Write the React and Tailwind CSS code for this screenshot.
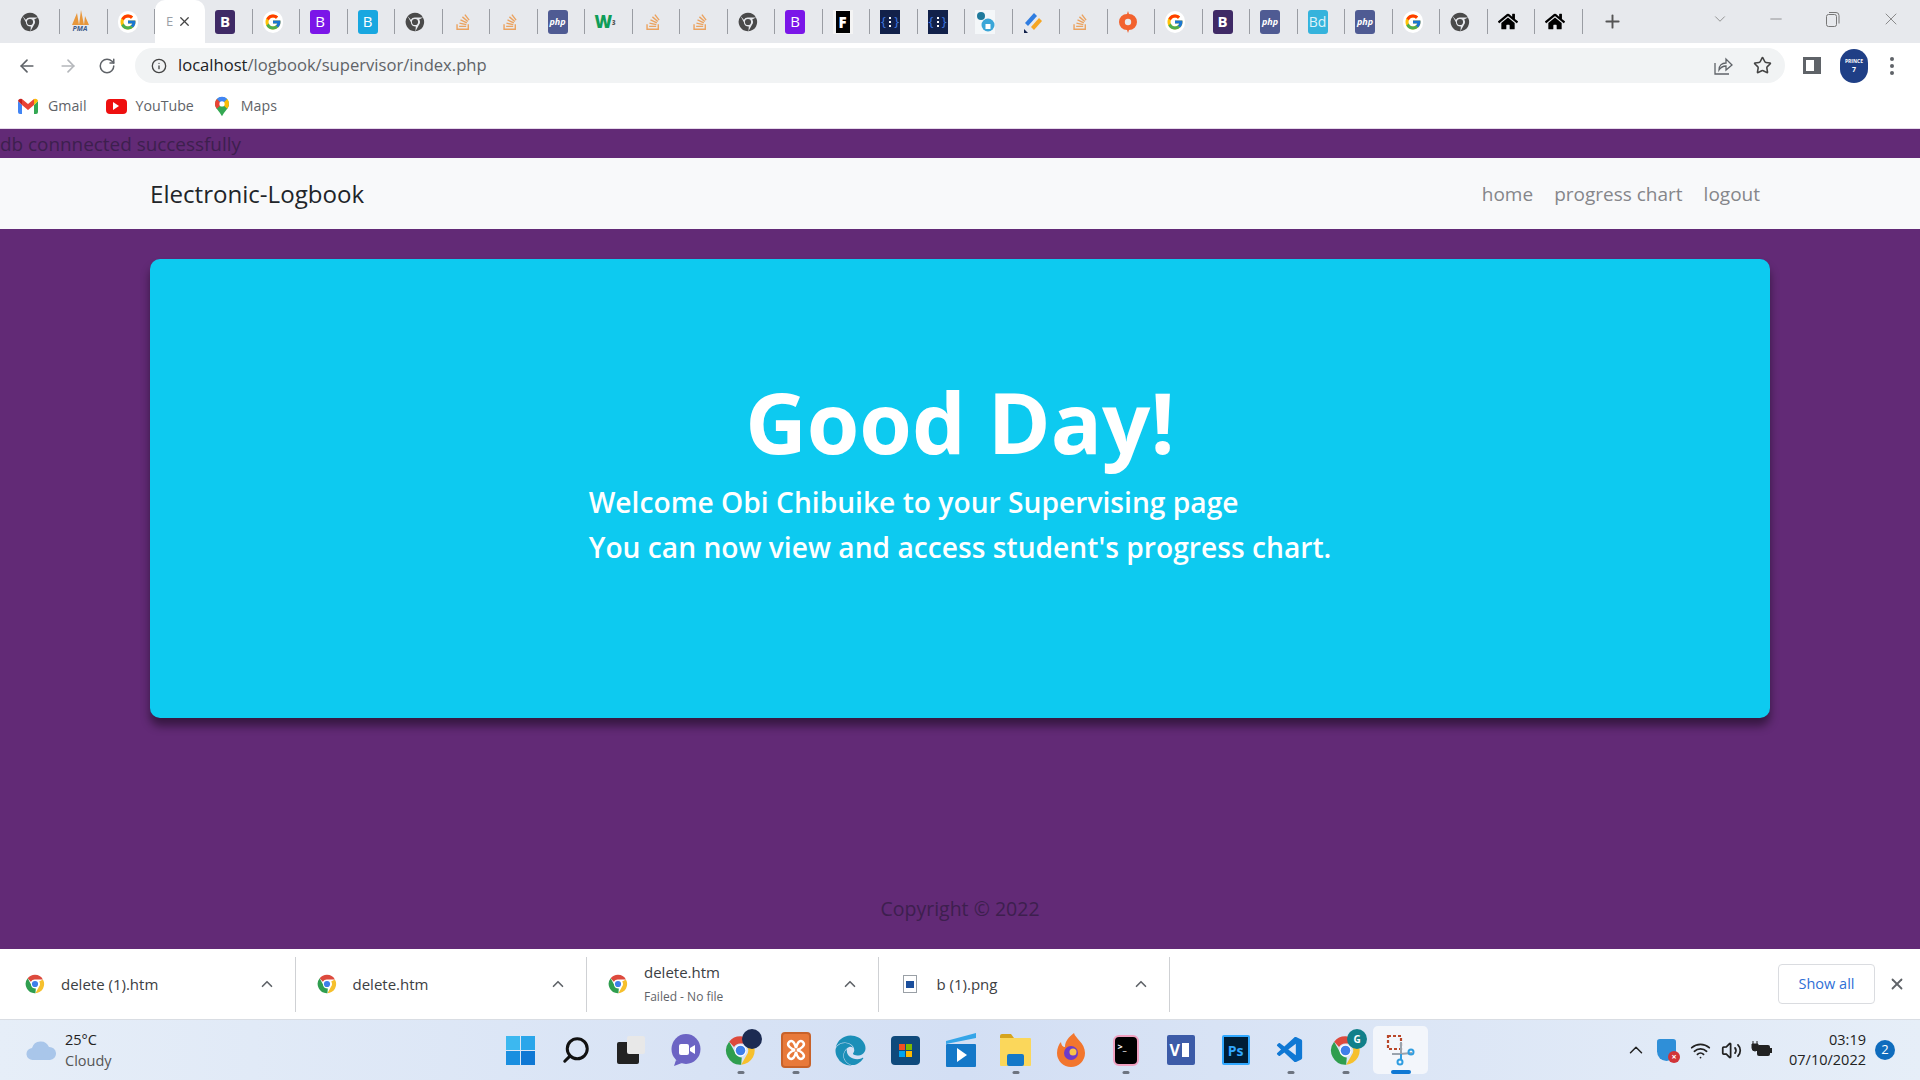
import { ArrowLeft, ArrowRight, RotateCw, Info, Star, ChevronUp, ChevronDown, X, Plus, Minus, Search, Wifi, Volume2 } from 'lucide-react';
import { FaHome, FaStackOverflow, FaEdge } from 'react-icons/fa';
import { FcGoogle } from 'react-icons/fc';
import { VscVscode } from 'react-icons/vsc';

function ChromeLogo({ size = 20, gray = false }) {
  const red = gray ? '#4a4a4a' : '#dd4a3d';
  const yellow = gray ? '#4a4a4a' : '#f6c02d';
  const green = gray ? '#4a4a4a' : '#2f9e4f';
  const blue = gray ? '#4a4a4a' : '#3f7fea';
  return (
    <svg width={size} height={size} viewBox="0 0 24 24" className="shrink-0">
      <path d="M12 1a11 11 0 0 1 9.5 5.5H12A5.5 5.5 0 0 0 7 9.3L3.2 5.2A11 11 0 0 1 12 1z" fill={red} />
      <path d="M21.5 6.5A11 11 0 0 1 12.5 23l4.3-7.6A5.5 5.5 0 0 0 17 9l4.5-2.5z" fill={yellow} />
      <path d="M3.2 5.2L7.4 12.8a5.5 5.5 0 0 0 5.6 4.6L12.5 23A11 11 0 0 1 3.2 5.2z" fill={green} />
      <circle cx="12" cy="12" r="4.6" fill={gray ? '#e7e9ed' : '#fff'} />
      <circle cx="12" cy="12" r="3.7" fill={gray ? '#4a4a4a' : blue} />
    </svg>
  );
}

function LetterIcon({ bg, color = 'text-white', label, cls = 'text-[15px] font-bold' }) {
  return (
    <div className={`w-[20px] h-[24px] rounded-[3px] flex items-center justify-center ${bg} ${color} ${cls}`}>
      {label}
    </div>
  );
}

function Favicon({ kind }) {
  switch (kind) {
    case 'chrome':
      return <ChromeLogo gray size={20} />;
    case 'google':
      return (
        <div className="w-[20px] h-[22px] rounded-full bg-white flex items-center justify-center">
          <FcGoogle size={18} />
        </div>
      );
    case 'pma':
      return (
        <div className="w-[20px] h-[24px] flex flex-col items-center">
          <svg width="20" height="15" viewBox="0 0 20 15">
            <path d="M2 15L7 3l2 12zM9 15l2-15 3 15zM14 15l1-9 4 9z" fill="#e8973b" />
          </svg>
          <span className="text-[7px] leading-[8px] font-bold italic text-[#3f5c8c]">PMA</span>
        </div>
      );
    case 'bsDark':
      return <LetterIcon bg="bg-[#3f2a66]" label="B" />;
    case 'bsPurple':
      return <LetterIcon bg="bg-[#7b16e8]" label="B" cls="text-[15px]" />;
    case 'bsBlue':
      return <LetterIcon bg="bg-[#18a7e0]" label="B" cls="text-[15px]" />;
    case 'so':
      return <FaStackOverflow size={18} color="#eba360" />;
    case 'php':
      return <LetterIcon bg="bg-[#4f5b93]" label="php" cls="text-[9px] font-bold italic" />;
    case 'w3':
      return <span className="text-[17px] leading-none font-black text-[#0f9d58]">W<sup className="text-[6px] text-[#555]">3</sup></span>;
    case 'fcc':
      return (
        <div className="w-[20px] h-[24px] bg-[#f4f4f4] flex items-center justify-center">
          <div className="w-[14px] h-[22px] bg-black text-white text-[15px] font-black leading-[22px] text-center">F</div>
        </div>
      );
    case 'brace':
      return (
        <div className="w-[20px] h-[24px] bg-[#12214a] flex items-center justify-between px-[1px] text-[#3f78e0] text-[13px] leading-none">
          <span>{'{'}</span>
          <span className="flex flex-col gap-[2px]">
            <span className="w-[2px] h-[2px] bg-white" />
            <span className="w-[2px] h-[2px] bg-white" />
            <span className="w-[2px] h-[2px] bg-white" />
          </span>
          <span>{'}'}</span>
        </div>
      );
    case 'gear':
      return (
        <svg width="20" height="24" viewBox="0 0 20 24">
          <rect width="20" height="24" fill="#f4f7f9" />
          <circle cx="6" cy="6" r="4" fill="#1f7a9c" />
          <circle cx="13" cy="15" r="6.5" fill="#3ba6d8" />
          <rect x="10.5" y="14" width="5" height="5" fill="#fff" />
        </svg>
      );
    case 'jira':
      return (
        <svg width="20" height="24" viewBox="0 0 20 24">
          <path d="M2 13L11 3l3 3-9 10z" fill="#2f7de1" />
          <path d="M8 17l8-9 3 3-8 9z" fill="#f5a623" />
          <path d="M1 19l4 4H1z" fill="#12214a" />
        </svg>
      );
    case 'origin':
      return (
        <svg width="18" height="24" viewBox="0 0 18 24">
          <path d="M9 1l1 3a8 8 0 0 1 0 16l-1 3-1-3A8 8 0 0 1 8 4z" fill="#f2622e" />
          <circle cx="9" cy="12" r="3.2" fill="#e7e9ed" />
        </svg>
      );
    case 'bd':
      return <LetterIcon bg="bg-[#35b3dc]" color="text-[#dff3fa]" label="Bd" cls="text-[14px]" />;
    case 'home':
      return <FaHome size={21} color="#000" />;
    default:
      return null;
  }
}

const beforeActive = ['pma', 'google'];
const afterActive = [
  'bsDark', 'google', 'bsPurple', 'bsBlue', 'chrome', 'so', 'so', 'php', 'w3', 'so', 'so', 'chrome',
  'bsPurple', 'fcc', 'brace', 'brace', 'gear', 'jira', 'so', 'origin', 'google', 'bsDark', 'php', 'bd',
  'php', 'google', 'chrome', 'home', 'home',
];

function Tab({ kind }) {
  return (
    <div className="w-[47.5px] h-[43px] shrink-0 flex items-center justify-between pl-[10px]">
      <div className="w-[20px] flex justify-center"><Favicon kind={kind} /></div>
      <span className="w-px h-[25px] bg-[#9a9da3]" />
    </div>
  );
}

function TabStrip() {
  return (
    <div className="h-[43px] bg-[#e7e9ed] flex items-center shrink-0 pl-[10px]">
      <div className="w-[50px] h-[43px] shrink-0 flex items-center justify-between pl-[10px]">
        <ChromeLogo gray size={20} />
        <span className="w-px h-[25px] bg-[#9a9da3]" />
      </div>
      {beforeActive.map((k, i) => <Tab key={i} kind={k} />)}
      <div className="w-[50px] h-[43px] shrink-0 bg-white rounded-t-[10px] flex items-center pl-[11px]">
        <span className="text-[13px] text-[#9aa0a6] w-[9px] overflow-hidden">E</span>
        <X size={15} strokeWidth={2} color="#444" className="ml-[2px]" />
      </div>
      {afterActive.map((k, i) => <Tab key={i} kind={k} />)}
      <Plus size={21} strokeWidth={2.2} color="#555" className="ml-[19px] shrink-0" />
      <ChevronDown size={18} strokeWidth={1} color="#777" className="ml-[88px] shrink-0 -mt-[6px]" />
      <Minus size={18} strokeWidth={1} color="#777" className="ml-[38px] shrink-0 -mt-[6px]" />
      <svg width="14" height="16" viewBox="0 0 14 16" fill="none" stroke="#777" className="ml-[41px] shrink-0 -mt-[6px]">
        <rect x="0.5" y="3.5" width="10" height="12" rx="2" />
        <path d="M3 1.5h7a3 3 0 0 1 3 3v8" />
      </svg>
      <X size={20} strokeWidth={1} color="#777" className="ml-[41px] shrink-0 -mt-[6px]" />
    </div>
  );
}

function Toolbar() {
  return (
    <div className="h-[43px] bg-white flex items-center shrink-0 pl-[17px] pt-[2px]">
      <ArrowLeft size={20} color="#5f6368" />
      <ArrowRight size={20} color="#b4b7bb" className="ml-[21px]" />
      <RotateCw size={18} color="#5f6368" className="ml-[20px]" />
      <div className="ml-[19px] w-[1650px] h-[35px] rounded-full bg-[#f1f3f4] flex items-center pl-[16px] pr-[13px]">
        <Info size={16} color="#444" />
        <span className="ml-[11px] text-[16.6px] text-[#202124]">localhost<span className="text-[#5f6368]">/logbook/supervisor/index.php</span></span>
        <svg width="20" height="20" viewBox="0 0 20 20" fill="none" stroke="#5f6368" strokeWidth="1.3" className="ml-auto">
          <path d="M2 7v11h14" />
          <path d="M6 14c0-5 3-7 7-7V3l6 6-6 5v-4c-3 0-5 1-7 4z" />
        </svg>
        <Star size={19} color="#444" className="ml-[20px]" />
      </div>
      <div className="ml-[18px] w-[18px] h-[17px] border-[3px] border-r-[7px] border-[#5f6368] bg-white" />
      <div className="ml-[19px] w-[28px] h-[34px] rounded-full bg-[#1f3f86] flex flex-col items-center justify-center text-[7px] text-white font-bold overflow-hidden">
        <span className="leading-[8px] text-[5px]">PRINCE</span>
        <span className="leading-[10px]">7</span>
      </div>
      <div className="ml-[22px] flex flex-col gap-[3px]">
        <span className="w-[4px] h-[4px] rounded-full bg-[#5f6368]" />
        <span className="w-[4px] h-[4px] rounded-full bg-[#5f6368]" />
        <span className="w-[4px] h-[4px] rounded-full bg-[#5f6368]" />
      </div>
    </div>
  );
}

function Bookmarks() {
  return (
    <div className="h-[42px] bg-white flex items-center shrink-0 pl-[18px] pb-[2px] text-[14.2px] text-[#5f6368]">
      <svg width="20" height="16" viewBox="0 0 20 16">
        <path d="M0 3v11a2 2 0 0 0 2 2h2V7z" fill="#4285f4" />
        <path d="M20 3v11a2 2 0 0 1-2 2h-2V7z" fill="#34a853" />
        <path d="M4 7l6 5 6-5V1l-6 5-6-5z" fill="#ea4335" />
        <path d="M0 3a3 3 0 0 1 4-2v6z" fill="#c5221f" />
        <path d="M20 3a3 3 0 0 0-4-2v6z" fill="#fbbc04" />
      </svg>
      <span className="ml-[10px]">Gmail</span>
      <div className="ml-[19px] w-[21px] h-[15px] rounded-[4px] bg-[#ee0f0f] flex items-center justify-center">
        <span className="w-0 h-0 border-y-[4px] border-y-transparent border-l-[6px] border-l-white" />
      </div>
      <span className="ml-[9px]">YouTube</span>
      <svg width="14" height="21" viewBox="0 0 16 22" className="ml-[21px]">
        <path d="M8 0a8 8 0 0 1 8 8c0 5-5 8-8 14-3-6-8-9-8-14a8 8 0 0 1 8-8z" fill="#34a853" />
        <path d="M2 2.5L8 8l6-5.5A8 8 0 0 0 8 0a8 8 0 0 0-6 2.5z" fill="#4285f4" />
        <path d="M0 8c0 2 1 4 2 5.5L8 8 2 2.5A8 8 0 0 0 0 8z" fill="#ea4335" />
        <path d="M16 8c0 2-1 4-2 5.5L8 8l6-5.5A8 8 0 0 1 16 8z" fill="#fbbc04" />
        <circle cx="8" cy="8" r="3" fill="#fff" />
      </svg>
      <span className="ml-[12px]">Maps</span>
    </div>
  );
}

function MainPage() {
  return (
    <div className="h-[821px] bg-[#622a76] flex flex-col shrink-0 border-t border-[#e5d9ea]">
      <div className="h-[29px] leading-[31px] text-[18.9px] text-[#3d1f4e]">db connnected successfully</div>
      <nav className="h-[71px] bg-[#f8f9fa] flex items-center px-[150px] pt-[2px]">
        <a className="text-[24.1px] text-[#212529]">Electronic-Logbook</a>
        <div className="ml-auto flex gap-[21px] text-[19px] text-[#85868a] pr-[10px]">
          <a>home</a>
          <a>progress chart</a>
          <a>logout</a>
        </div>
      </nav>
      <div className="px-[150px] pt-[30px]">
        <div className="h-[459px] bg-[#0dcaf0] rounded-[10px] shadow-[0_8px_10px_rgba(0,0,0,0.45)] flex flex-col items-center pt-[110px] text-white">
          <h1 className="text-[85px] leading-[104px] font-bold">Good Day!</h1>
          <div className="text-[28.2px] leading-[45px] font-semibold mt-[7px]">
            <p>Welcome Obi Chibuike to your Supervising page</p>
            <p>You can now view and access student's progress chart.</p>
          </div>
        </div>
      </div>
      <div className="mt-[177px] text-center text-[19.5px] leading-[28px] text-[#3d1f4e]">Copyright © 2022</div>
    </div>
  );
}

function DownloadItem({ name, sub, png }) {
  return (
    <div className="w-[291.5px] h-[55px] shrink-0 flex items-center border-r border-[#cfd1d4] pl-[21px] pr-[19px]">
      {png ? (
        <div className="w-[14px] h-[18px] border border-[#9aa0a6] bg-white flex items-center justify-center ml-[3px] mr-[3px]">
          <span className="w-[8px] h-[7px] bg-[#1b4f9c]" />
        </div>
      ) : (
        <ChromeLogo size={20} />
      )}
      <div className={`${png ? 'ml-[17px]' : 'ml-[16px]'} flex flex-col`}>
        <span className="text-[15px] leading-[20px] text-[#3c4043]">{name}</span>
        {sub && <span className="text-[12px] leading-[20px] mt-[5px] text-[#5f6368]">{sub}</span>}
      </div>
      <ChevronUp size={18} strokeWidth={2.2} color="#5f6368" className="ml-auto" />
    </div>
  );
}

function DownloadBar() {
  return (
    <div className="h-[71px] bg-white flex items-center shrink-0 pl-[4px] border-b border-[#d9dde3]">
      <DownloadItem name="delete (1).htm" />
      <DownloadItem name="delete.htm" />
      <DownloadItem name="delete.htm" sub="Failed - No file" />
      <DownloadItem name="b (1).png" png />
      <button className="ml-auto w-[97px] h-[40px] border border-[#dadce0] rounded-[4px] text-[14.5px] text-[#2f6fd6]">Show all</button>
      <X size={18} strokeWidth={2.4} color="#5f6368" className="ml-[13px] mr-[14px]" />
    </div>
  );
}

function TaskIcon({ children, dot, active }) {
  return (
    <div className={`relative w-[55px] h-[48px] shrink-0 rounded-[5px] flex items-center justify-center ${active ? 'bg-[#f3f6fb]' : ''}`}>
      {children}
      {dot && <span className="absolute bottom-0 left-1/2 -translate-x-1/2 w-[7px] h-[3px] rounded-full bg-[#6d7480]" />}
      {active && <span className="absolute bottom-0 left-1/2 -translate-x-1/2 w-[20px] h-[4px] rounded-full bg-[#0f78d4]" />}
    </div>
  );
}

function Taskbar() {
  return (
    <div className="h-[60px] flex items-center shrink-0 bg-gradient-to-r from-[#e6eef8] via-[#d3dff4] to-[#e6eef8]">
      <div className="w-[493px] shrink-0 flex items-center pl-[26px]">
        <svg width="30" height="22" viewBox="0 0 30 22">
          <path d="M7 21a6 6 0 0 1-1-12 9 9 0 0 1 17-1 6.5 6.5 0 0 1 1 13z" fill="#a9c6ea" />
        </svg>
        <div className="ml-[9px] flex flex-col text-[14.5px] leading-[21px]">
          <span className="text-[#222]">25°C</span>
          <span className="text-[#555]">Cloudy</span>
        </div>
      </div>
      <TaskIcon>
        <div className="grid grid-cols-2 gap-[1px] w-[29px] h-[29px]">
          <span className="bg-[#3cb8f0]" /><span className="bg-[#2aa6ea]" />
          <span className="bg-[#1a8fe0]" /><span className="bg-[#0f78d4]" />
        </div>
      </TaskIcon>
      <TaskIcon><Search size={30} strokeWidth={2.4} color="#111" className="-scale-x-100" /></TaskIcon>
      <TaskIcon>
        <div className="w-[28px] h-[28px] relative">
          <span className="absolute left-0 bottom-0 w-[22px] h-[22px] bg-[#222] rounded-[2px]" />
          <span className="absolute right-0 top-0 w-[18px] h-[18px] bg-[#e8e8e8] rounded-[2px]" />
        </div>
      </TaskIcon>
      <TaskIcon>
        <svg width="30" height="32" viewBox="0 0 30 32">
          <ellipse cx="15" cy="15" rx="14.5" ry="15" fill="#6c64c4" />
          <path d="M5 26l-2 6 8-3z" fill="#6c64c4" />
          <rect x="8" y="10" width="10" height="11" rx="2" fill="#fff" />
          <path d="M19 14l5-3v9l-5-3z" fill="#fff" />
        </svg>
      </TaskIcon>
      <TaskIcon dot>
        <ChromeLogo size={31} />
        <span className="absolute top-[3px] right-[6px] w-[20px] h-[20px] rounded-full bg-[#1c2b52]" />
      </TaskIcon>
      <TaskIcon dot>
        <svg width="30" height="36" viewBox="0 0 30 36">
          <rect x="1" y="1" width="28" height="34" rx="3" fill="#e8793a" stroke="#c8622a" strokeWidth="2" />
          <path d="M8 10c4-3 6 2 7 6 1-4 3-9 7-6 3 3-2 7-6 8 4 1 9 5 6 8-4 3-6-2-7-6-1 4-3 9-7 6-3-3 2-7 6-8-4-1-9-5-6-8z" fill="none" stroke="#fff" strokeWidth="2.4" />
        </svg>
      </TaskIcon>
      <TaskIcon><FaEdge size={31} color="#1b8fb8" /></TaskIcon>
      <TaskIcon>
        <div className="w-[29px] h-[29px] rounded-[4px] bg-[#0f4a7c] grid grid-cols-2 gap-[1px] p-[8px]">
          <span className="bg-[#f25022]" /><span className="bg-[#7fba00]" />
          <span className="bg-[#00a4ef]" /><span className="bg-[#ffb900]" />
        </div>
      </TaskIcon>
      <TaskIcon>
        <svg width="30" height="34" viewBox="0 0 30 34">
          <path d="M0 8L30 0v5L0 11z" fill="#35a5e8" />
          <rect y="11" width="30" height="23" rx="1" fill="#1478c8" />
          <path d="M11 15l10 7-10 7z" fill="#fff" />
        </svg>
      </TaskIcon>
      <TaskIcon dot>
        <svg width="31" height="32" viewBox="0 0 31 32">
          <path d="M0 2a2 2 0 0 1 2-2h9l3 4H0z" fill="#d6a41e" />
          <rect y="4" width="31" height="28" rx="1" fill="#fbd75b" />
          <rect x="7" y="20" width="17" height="12" rx="2" fill="#1478c8" />
        </svg>
      </TaskIcon>
      <TaskIcon>
        <svg width="30" height="34" viewBox="0 0 30 34">
          <path d="M18 0c1 5 11 10 11 20a14 14 0 0 1-28 0c0-5 2-9 4-11 0 3 2 5 4 5 0-6 4-10 9-14z" fill="#f2762e" />
          <circle cx="15" cy="20" r="7" fill="#6e3bc9" />
          <circle cx="17" cy="19" r="3.5" fill="#f8c34a" />
        </svg>
      </TaskIcon>
      <TaskIcon dot>
        <div className="w-[26px] h-[31px] rounded-[6px] bg-black border-2 border-[#f0a0c0] text-white text-[9px] font-bold pl-[3px] pt-[3px]">{'>_'}</div>
      </TaskIcon>
      <TaskIcon>
        <div className="w-[28px] h-[30px] rounded-[2px] bg-[#3c5ba8] flex items-center pl-[3px] text-white text-[16px] font-bold">V<span className="ml-[1px] w-[9px] h-[16px] bg-white border border-[#3c5ba8]" /></div>
      </TaskIcon>
      <TaskIcon>
        <div className="w-[28px] h-[30px] rounded-[2px] bg-[#001e36] border-2 border-[#31a8ff] flex items-center justify-center text-[#31a8ff] text-[14px] font-bold">Ps</div>
      </TaskIcon>
      <TaskIcon dot><VscVscode size={31} color="#0f78d4" /></TaskIcon>
      <TaskIcon dot>
        <ChromeLogo size={31} />
        <span className="absolute top-[3px] right-[6px] w-[20px] h-[20px] rounded-full bg-[#11808a] text-white text-[10px] font-bold flex items-center justify-center">G</span>
      </TaskIcon>
      <TaskIcon active>
        <svg width="30" height="32" viewBox="0 0 30 32">
          <rect x="2" y="2" width="13" height="13" fill="none" stroke="#b9472a" strokeWidth="2.2" strokeDasharray="3 2" />
          <path d="M15 8v12H6" stroke="#9aa3ad" strokeWidth="2" fill="none" />
          <path d="M14 20l12-1" stroke="#9aa3ad" strokeWidth="2" />
          <circle cx="25" cy="18" r="2.5" fill="none" stroke="#2f9de0" strokeWidth="2" />
          <circle cx="14" cy="28" r="2.5" fill="none" stroke="#2f9de0" strokeWidth="2" />
          <path d="M15 20v6" stroke="#2f9de0" strokeWidth="2" />
        </svg>
      </TaskIcon>
      <div className="ml-auto flex items-center pr-[25px]">
        <ChevronUp size={22} strokeWidth={1.6} color="#222" />
        <div className="ml-[10px] relative w-[20px] h-[23px]">
          <div className="w-[19px] h-[22px] rounded-b-[10px] rounded-t-[3px] bg-[#2f8fd8]" />
          <span className="absolute -right-[3px] -bottom-[1px] w-[12px] h-[12px] rounded-full bg-[#d13438] text-white text-[9px] leading-[12px] text-center font-bold">×</span>
        </div>
        <Wifi size={21} color="#222" className="ml-[13px]" />
        <Volume2 size={21} color="#222" className="ml-[10px]" />
        <svg width="22" height="20" viewBox="0 0 22 20" className="ml-[9px]">
          <rect x="6" y="5" width="13" height="11" rx="2" fill="#222" />
          <rect x="19" y="8" width="2" height="5" fill="#222" />
          <path d="M1 4h6v4a3 3 0 0 1-6 0zM2 1v3M6 1v3" fill="#222" stroke="#222" />
        </svg>
        <div className="ml-[16px] flex flex-col items-end text-[14.5px] leading-[20px] text-[#222]">
          <span>03:19</span>
          <span>07/10/2022</span>
        </div>
        <div className="ml-[9px] w-[20px] h-[20px] rounded-full bg-[#0f6cbd] text-white text-[13px] flex items-center justify-center">2</div>
      </div>
    </div>
  );
}

export default function App() {
  return (
    <div className="w-[1920px] h-[1080px] overflow-hidden flex flex-col font-['Open_Sans',sans-serif]">
      <TabStrip />
      <Toolbar />
      <Bookmarks />
      <MainPage />
      <DownloadBar />
      <Taskbar />
    </div>
  );
}
